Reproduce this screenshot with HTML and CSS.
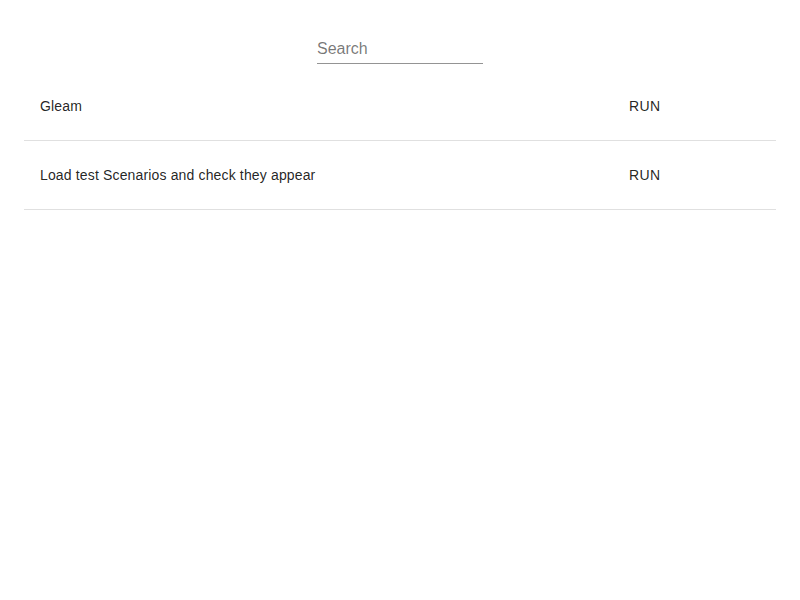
FILE: index.html
```html
<!DOCTYPE html>
<html>
<head>
<meta charset="utf-8">
<link rel="stylesheet" href="styles.css">
</head>
<body>
<div class="page">
  <div class="search-wrap">
    <div class="search">
      <input class="search-input" type="text" placeholder="Search">
    </div>
  </div>
  <div class="table">
    <div class="row">
      <div class="cell name">Gleam</div>
      <div class="cell action"><button class="run">RUN</button></div>
    </div>
    <div class="row">
      <div class="cell name">Load test Scenarios and check they appear</div>
      <div class="cell action"><button class="run">RUN</button></div>
    </div>
  </div>
</div>
</body>
</html>
```

FILE: styles.css
```css
html, body {
  margin: 0;
  padding: 0;
  background: #fff;
  font-family: "Liberation Sans", Arial, sans-serif;
  color: rgba(0,0,0,0.87);
}
.page {
  padding: 31px 24px 0;
}
.search-wrap {
  display: flex;
  justify-content: center;
  margin-bottom: 8px;
}
.search {
  width: 166px;
  border-bottom: 1px solid rgba(0,0,0,0.42);
}
.search-input {
  display: block;
  width: 100%;
  box-sizing: border-box;
  border: 0;
  outline: none;
  background: transparent;
  font-family: "Liberation Sans", Arial, sans-serif;
  font-size: 16px;
  line-height: 19px;
  padding: 8px 0 5px;
  color: rgba(0,0,0,0.87);
}
.search-input::placeholder {
  color: rgba(0,0,0,0.54);
  opacity: 1;
}
.table {
  width: 100%;
}
.row {
  display: grid;
  grid-template-columns: 1fr 171px;
  border-bottom: 1px solid rgba(224,224,224,1);
}
.cell {
  padding: 16px;
  display: flex;
  align-items: center;
  font-size: 14px;
  letter-spacing: 0.01071em;
}
.run {
  font-family: "Liberation Sans", Arial, sans-serif;
  font-size: 14px;
  letter-spacing: 0.02857em;
  text-transform: uppercase;
  border: 0;
  background: transparent;
  color: rgba(0,0,0,0.87);
  padding: 6px 8px;
  min-width: 64px;
  height: 36px;
  text-align: left;
  cursor: pointer;
}
```
